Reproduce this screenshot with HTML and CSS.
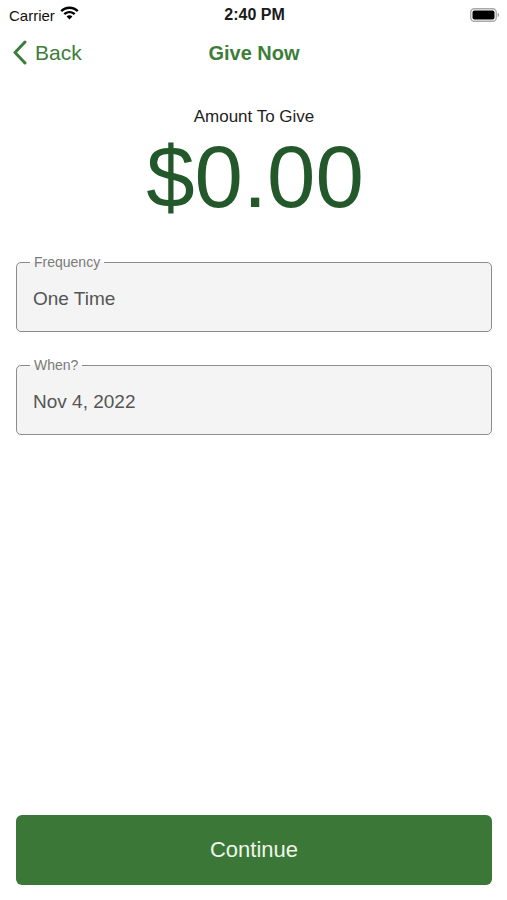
FILE: index.html
```html
<!DOCTYPE html>
<html lang="en">
  <head>
    <meta charset="utf-8" />
    <meta name="viewport" content="width=device-width, initial-scale=1" />
    <title>Give Now</title>
    <link rel="stylesheet" href="styles.css">
  </head>

  <body>
    <div class="screen">
      <div class="status-bar">
        <div class="status-left">
          <span>Carrier</span>
          <svg class="wifi" width="19" height="14" viewBox="0 0 19 14">
            <path d="M9.5 0.5C5.9 0.5 2.7 1.9 0.4 4.2L2.1 5.9C4 4 6.6 2.9 9.5 2.9S15 4 16.9 5.9L18.6 4.2C16.3 1.9 13.1 0.5 9.5 0.5Z" />
            <path d="M9.5 4.9C7.1 4.9 5 5.8 3.5 7.3L5.2 9C6.3 7.9 7.8 7.3 9.5 7.3S12.7 7.9 13.8 9L15.5 7.3C14 5.8 11.9 4.9 9.5 4.9Z" />
            <path d="M9.5 9.3C8.3 9.3 7.3 9.7 6.6 10.4L9.5 13.4L12.4 10.4C11.7 9.7 10.7 9.3 9.5 9.3Z" />
          </svg>
        </div>
        <span class="clock">2:40 PM</span>
        <svg class="battery" width="30" height="14" viewBox="0 0 30 14">
          <rect x="0.75" y="0.75" width="25.5" height="12.5" rx="3.6" fill="none" stroke="#a8a8a8" stroke-width="1.3" />
          <rect x="2.5" y="2.5" width="22" height="9" rx="2" fill="#000" />
          <path d="M27.6 4.8C28.6 5.1 29.2 6 29.2 7S28.6 8.9 27.6 9.2Z" fill="#a8a8a8" />
        </svg>
      </div>

      <div class="nav-bar">
        <a class="back" href="#">
          <svg width="15" height="25" viewBox="0 0 15 25">
            <polyline points="13,2 3,12.5 13,23" fill="none" stroke="currentColor" stroke-width="3" stroke-linecap="round" stroke-linejoin="round" />
          </svg>
          <span>Back</span>
        </a>
        <h1 class="title">Give Now</h1>
      </div>

      <div class="amount">
        <p class="amount-label">Amount To Give</p>
        <p class="amount-value">$0.00</p>
      </div>

      <div class="fields">
        <fieldset class="field">
          <legend>Frequency</legend>
          <div class="field-value">One Time</div>
        </fieldset>
        <fieldset class="field">
          <legend>When?</legend>
          <div class="field-value">Nov 4, 2022</div>
        </fieldset>
      </div>

      <div class="spacer"></div>

      <button class="continue">Continue</button>
    </div>
  </body>
</html>
```

FILE: styles.css
```css
html {
  font-family: "Liberation Sans", Arial, Helvetica, sans-serif;
  font-size: 16px;
}

body {
  margin: 0;
  background-color: white;
}

p {
  margin: 0;
}

.screen {
  display: flex;
  flex-direction: column;
  width: 507px;
  height: 900px;
  box-sizing: border-box;
  padding: 0 15px 15px 16px;
}

.status-bar {
  display: flex;
  align-items: center;
  justify-content: space-between;
  height: 28px;
  padding-top: 2px;
  margin: 0 -8px 0 -7px;
  color: #111;
}

.status-left {
  display: flex;
  align-items: center;
  gap: 5px;
  width: 110px;
  font-size: 15px;
  padding-bottom: 2px;
}

.wifi {
  fill: #000;
  margin-top: -5px;
}

.clock {
  font-size: 16px;
  font-weight: bold;
  color: #1a1a1a;
  padding-bottom: 2px;
}

.battery {
  width: 30px;
  margin-left: 80px;
  margin-top: -3px;
}

.nav-bar {
  position: relative;
  display: flex;
  align-items: center;
  justify-content: center;
  height: 46px;
  color: #3d7d3a;
}

.back {
  position: absolute;
  left: -4px;
  top: 10px;
  display: flex;
  align-items: center;
  gap: 8px;
  color: inherit;
  text-decoration: none;
  font-size: 21px;
}

.title {
  margin: 0;
  font-size: 20px;
  font-weight: bold;
}

.amount {
  display: flex;
  flex-direction: column;
  align-items: center;
  padding-top: 31px;
}

.amount-label {
  font-size: 17px;
  color: #1e1e1e;
  line-height: 20px;
}

.amount-value {
  font-size: 87px;
  line-height: 100px;
  color: #23582a;
  margin-left: 2px;
}

.fields {
  display: flex;
  flex-direction: column;
  gap: 25px;
  padding-top: 27px;
}

.field {
  margin: 0;
  height: 78px;
  box-sizing: border-box;
  padding: 0 0 0 13px;
  border: 1.5px solid #8c8c8c;
  border-radius: 5px;
  background-color: #f4f4f4;
}

.field legend {
  padding: 0 4px;
  font-size: 14px;
  line-height: 16px;
  color: #7a7a7a;
}

.field-value {
  padding: 18px 0 0 3px;
  font-size: 19px;
  color: #555;
}

.spacer {
  flex: 1;
}

.continue {
  height: 70px;
  border: none;
  border-radius: 6px;
  background-color: #3b7736;
  color: #eef5ea;
  font-family: inherit;
  font-size: 22px;
}
```
